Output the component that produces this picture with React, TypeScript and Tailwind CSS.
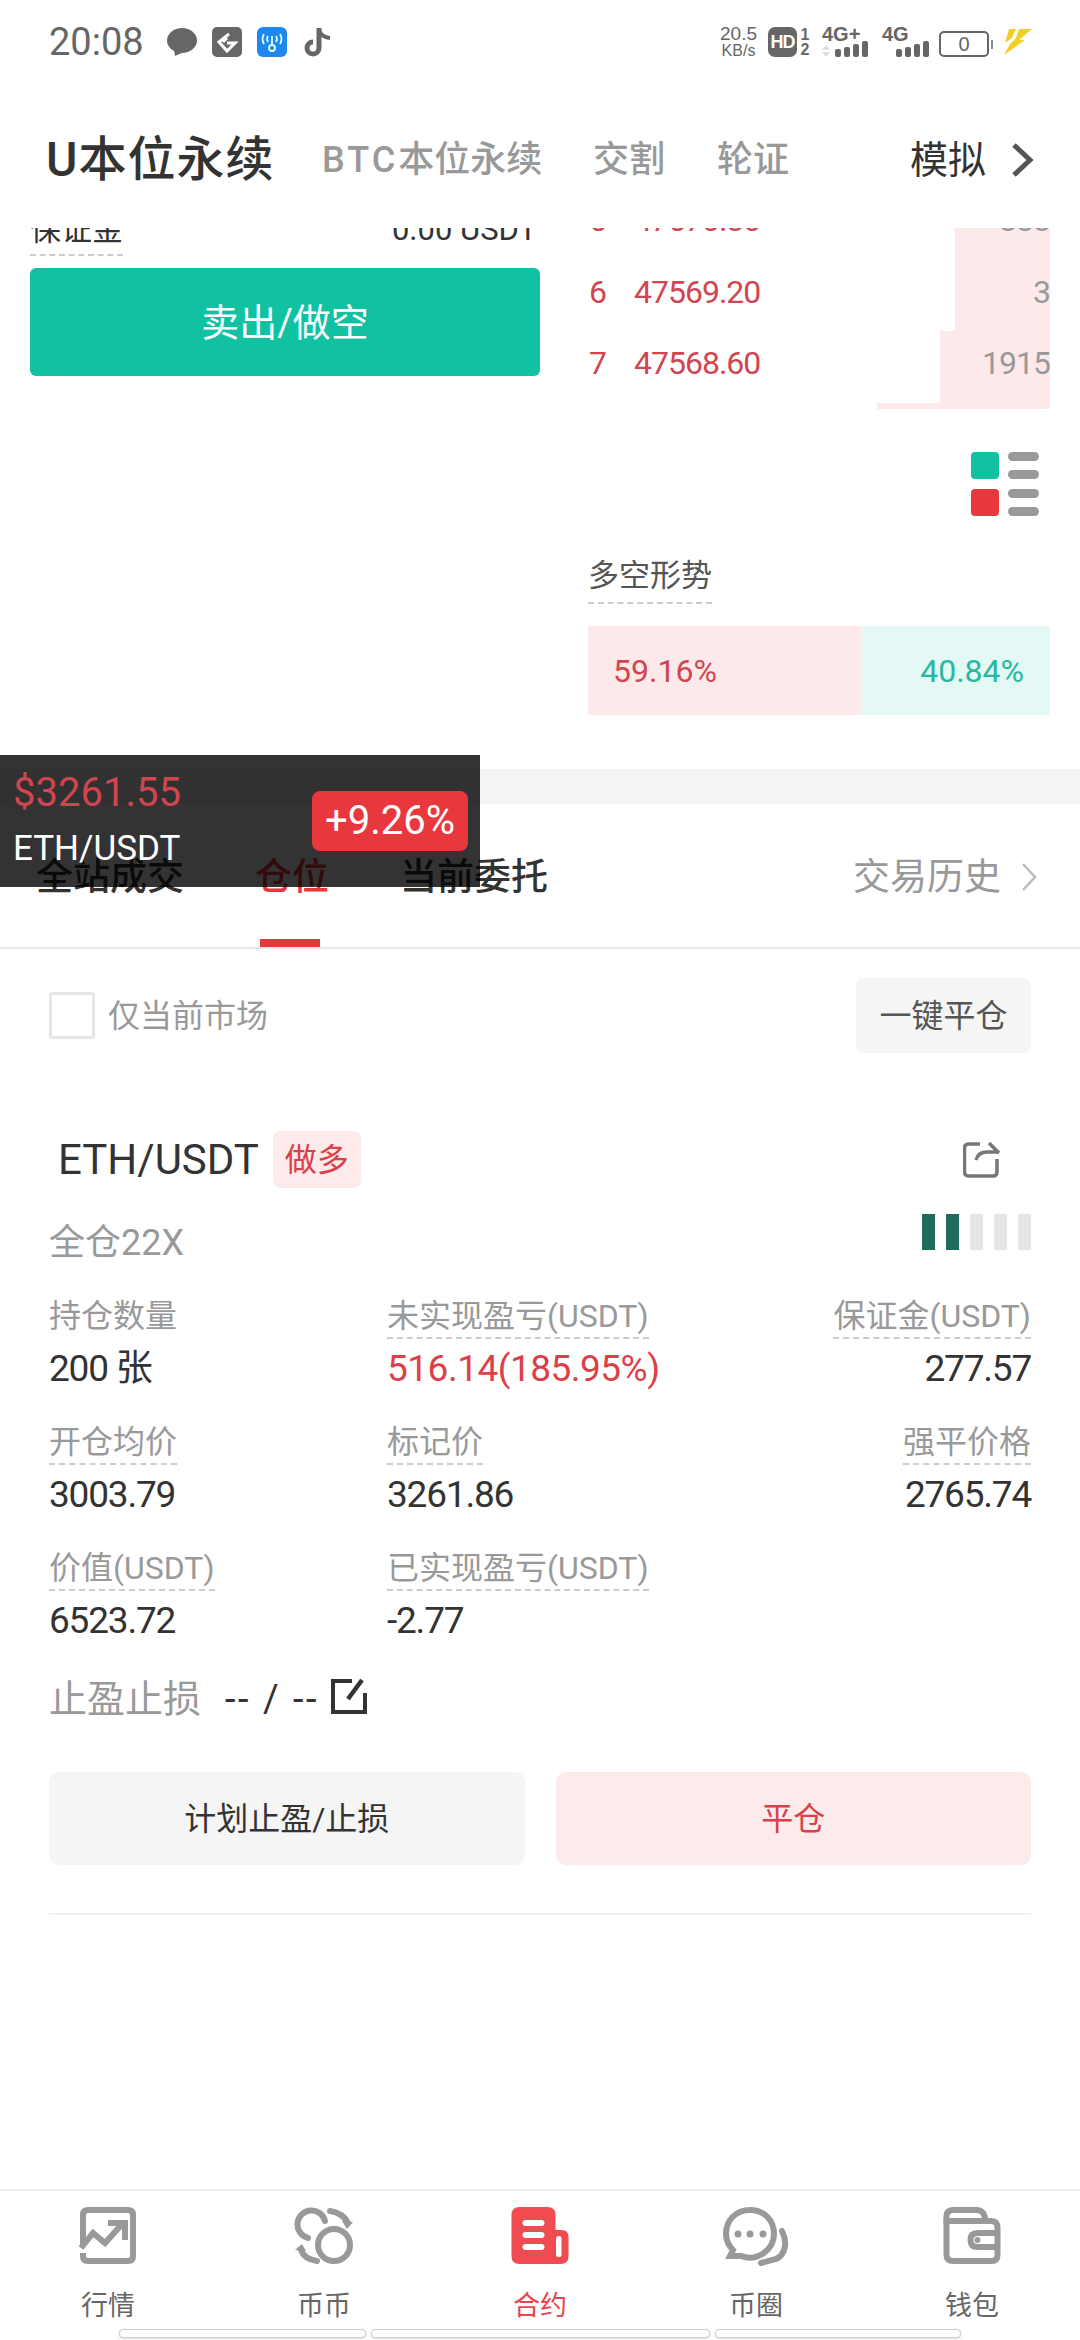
import React from "react";

const ui = { fontFamily: "Roboto, 'Noto Sans CJK SC', sans-serif" };

const tabs = ["全站成交", "仓位", "当前委托"];

type Cell = { label: string; value: string; dashed?: boolean; red?: boolean };
const cells: Cell[][] = [
  [
    { label: "持仓数量", value: "200 张" },
    { label: "未实现盈亏(USDT)", value: "516.14(185.95%)", dashed: true, red: true },
    { label: "保证金(USDT)", value: "277.57", dashed: true },
  ],
  [
    { label: "开仓均价", value: "3003.79", dashed: true },
    { label: "标记价", value: "3261.86", dashed: true },
    { label: "强平价格", value: "2765.74", dashed: true },
  ],
  [
    { label: "价值(USDT)", value: "6523.72", dashed: true },
    { label: "已实现盈亏(USDT)", value: "-2.77", dashed: true },
  ],
];

function StatusIcons() {
  return (
    <div className="flex items-center">
      <svg width="30" height="28" viewBox="0 0 30 28" className="ml-[23px]" fill="#666">
        <ellipse cx="15" cy="12.5" rx="15" ry="12.5" />
        <path d="M7 21 L8 28 L17 24 Z" />
      </svg>
      <svg width="30" height="30" viewBox="0 0 30 30" className="ml-[15px]">
        <rect width="30" height="30" rx="5" fill="#666" />
        <path d="M17 7 L7 15 L15 24 L23 16 L15 16 M15 11 L11 15" fill="none" stroke="#fff" strokeWidth="3" />
      </svg>
      <svg width="30" height="30" viewBox="0 0 30 30" className="ml-[15px]">
        <rect width="30" height="30" rx="6" fill="#1e88f0" />
        <circle cx="15" cy="21" r="3" fill="none" stroke="#dff" strokeWidth="1.8" />
        <path d="M15 9 V18 M11 9 Q9 12 11 15 M19 9 Q21 12 19 15 M7 7 Q4 12 7 17 M23 7 Q26 12 23 17" fill="none" stroke="#dff" strokeWidth="1.8" />
      </svg>
      <svg width="28" height="30" viewBox="0 0 28 30" className="ml-[17px]" fill="none" stroke="#666" strokeWidth="5">
        <path d="M15 1 V21 A6 6 0 1 1 9 15" />
        <path d="M15 3 Q17 10 26 11" strokeWidth="4" />
      </svg>
    </div>
  );
}

function Signal() {
  return (
    <div className="flex items-end gap-[3px] h-[16px]">
      <div className="w-[6px] h-[8px] bg-[#666] rounded-[2px]" />
      <div className="w-[6px] h-[10px] bg-[#666] rounded-[2px]" />
      <div className="w-[6px] h-[13px] bg-[#666] rounded-[2px]" />
      <div className="w-[6px] h-[16px] bg-[#666] rounded-[2px]" />
    </div>
  );
}

function StatusBar() {
  return (
    <div className="h-[70px] pt-[27px] pl-[49px] pr-[48px] flex items-start justify-between">
      <div className="flex items-center h-[30px]">
        <span className="text-[38px] leading-[30px] text-[#666]">20:08</span>
        <StatusIcons />
      </div>
      <div className="flex items-center h-[30px] text-[#666]" style={{ fontFamily: "'Liberation Sans', sans-serif" }}>
        <div className="w-[37px] mr-[11px] text-center">
          <div className="text-[19px] leading-[16px]">20.5</div>
          <div className="text-[16px] leading-[14px] mt-[2px]">KB/s</div>
        </div>
        <div className="w-[29px] h-[30px] bg-[#666] rounded-[7px] text-white text-[18px] font-bold flex items-center justify-center tracking-[-1px]">HD</div>
        <div className="w-[10px] ml-[3px] mr-[12px] text-[16px] font-bold leading-[15px] text-center">1<br />2</div>
        <div className="w-[46px] mr-[14px] flex flex-col">
          <span className="text-[20px] font-bold leading-[14px]">4G+</span>
          <div className="flex items-end justify-between">
            <div className="flex flex-col gap-[2px]">
              <span className="block border-x-[4px] border-b-[5px] border-x-transparent border-b-[#ddd]" />
              <span className="block border-x-[4px] border-t-[5px] border-x-transparent border-t-[#ddd]" />
            </div>
            <Signal />
          </div>
        </div>
        <div className="w-[47px] mr-[10px] flex flex-col">
          <span className="text-[20px] font-bold leading-[14px]">4G</span>
          <div className="flex justify-end"><Signal /></div>
        </div>
        <div className="w-[50px] h-[26px] mt-[4px] border-2 border-[#666] rounded-[5px] flex items-center justify-center text-[20px] leading-none">0</div>
        <div className="w-[2px] h-[9px] mt-[4px] mx-[2px] bg-[#888]" />
        <svg width="30" height="26" viewBox="0 0 30 26" className="ml-[7px]" fill="#f3cf26">
          <path d="M7 0 H14 L10 9 L3 14 Z M17 0 H30 L17 11 L23 11 L2 26 L8 15 L14 9 Z" />
        </svg>
      </div>
    </div>
  );
}

function Header() {
  return (
    <div className="h-[158px] pt-[60px] pl-[46px] pr-[45px] flex items-start">
      <div className="flex items-center h-[60px] w-full">
        <span className="text-[48px] leading-none font-medium text-[#333] w-[276px] tracking-[1px]">U本位永续</span>
        <span className="text-[36px] leading-none font-medium text-[#999] w-[271px]"><span className="tracking-[3px]">BTC</span>本位永续</span>
        <span className="text-[36px] leading-none font-medium text-[#999] w-[124px]">交割</span>
        <span className="text-[36px] leading-none font-medium text-[#999]">轮证</span>
        <span className="ml-auto text-[38px] leading-none text-[#333]">模拟</span>
        <svg width="26" height="36" viewBox="0 0 26 36" className="ml-[23px]" fill="none" stroke="#555" strokeWidth="5">
          <path d="M5 3 L21 18 L5 33" />
        </svg>
      </div>
    </div>
  );
}

function Market() {
  return (
    <div className="h-[541px] overflow-hidden relative">
      <div className="flex -mt-[24px]">
        <div className="ml-[30px] shrink-0 w-[510px]">
          <div className="h-[52px] flex items-end justify-between text-[31px] text-[#333]">
            <span className="border-b-2 border-dashed border-[#ccc] leading-[40px] pb-[4px]">保证金</span>
            <span className="pb-[6px] pr-[3px] leading-[40px]">0.00 USDT</span>
          </div>
          <div className="h-[108px] mt-[12px] bg-[#10c2a2] rounded-[6px] flex items-center justify-center text-[38px] text-white pt-[2px]">卖出/做空</div>
        </div>
        <div className="ml-[48px] w-[462px] shrink-0">
          <div className="h-[190px] relative text-[32px]">
            <div className="absolute right-0 top-[24px] w-[95px] h-[103px] bg-[#fde9e9]" />
            <div className="absolute right-0 top-[127px] w-[110px] h-[72px] bg-[#fde9e9]" />
            <div className="absolute right-0 top-[199px] w-[173px] h-[6px] bg-[#fde9e9]" />
            {[
              { n: "5", p: "47570.80", q: "888", y: "-top-[8px]" },
              { n: "6", p: "47569.20", q: "3", y: "top-[64px]" },
              { n: "7", p: "47568.60", q: "1915", y: "top-[135px]" },
            ].map((r) => (
              <div key={r.n} className={`absolute left-0 right-0 ${r.y} h-[48px] flex items-center leading-none tracking-[-1px]`}>
                <span className="w-[46px] pl-[1px] text-[#d0454f]">{r.n}</span>
                <span className="text-[#d0454f]">{r.p}</span>
                <span className="ml-auto text-[#999]">{r.q}</span>
              </div>
            ))}
          </div>
        </div>
      </div>
      <div className="absolute right-[41px] top-[224px] w-[68px] h-[63px] grid grid-cols-[28px_31px] gap-x-[9px] gap-y-[10px]">
        <div className="h-[27px] rounded-[4px] bg-[#10c2a2]" />
        <div className="flex flex-col justify-between">
          <div className="h-[9px] rounded-full bg-[#999]" />
          <div className="h-[9px] rounded-full bg-[#999]" />
        </div>
        <div className="h-[27px] rounded-[4px] bg-[#e8383d]" />
        <div className="flex flex-col justify-between">
          <div className="h-[9px] rounded-full bg-[#999]" />
          <div className="h-[9px] rounded-full bg-[#999]" />
        </div>
      </div>
      <div className="absolute left-[588px] right-[30px] top-[326px]">
        <span className="inline-block text-[31px] leading-[44px] text-[#555] border-b-2 border-dashed border-[#ccc] pb-[4px]">多空形势</span>
        <div className="mt-[22px] h-[89px] flex text-[32px]">
          <div className="w-[273px] bg-[#fde9e9] text-[#d0454f] flex items-center pl-[25px]">59.16%</div>
          <div className="flex-1 bg-[#e4f8f6] text-[#26b8a0] flex items-center justify-end pr-[26px]">40.84%</div>
        </div>
      </div>
    </div>
  );
}

function Position() {
  return (
    <div className="px-[49px]">
      <div className="flex items-center justify-between pt-[29px]">
        <div className="flex items-center">
          <div className="w-[46px] h-[47px] border-[3px] border-[#e6e6e6] rounded-[4px]" />
          <span className="ml-[13px] text-[32px] leading-none text-[#999]">仅当前市场</span>
        </div>
        <div className="w-[175px] h-[75px] bg-[#f5f5f5] rounded-[8px] flex items-center justify-center text-[32px] text-[#555]">一键平仓</div>
      </div>
      <div className="flex items-center justify-between mt-[78px] h-[57px]">
        <div className="flex items-center pl-[9px]">
          <span className="text-[42px] leading-none text-[#333]">ETH/USDT</span>
          <span className="ml-[14px] w-[88px] h-[57px] rounded-[8px] bg-[#fdeaea] flex items-center justify-center text-[32px] text-[#d9404a]">做多</span>
        </div>
        <svg width="38" height="36" viewBox="0 0 38 36" className="mr-[30px]" fill="none" stroke="#777" strokeWidth="3.5">
          <path d="M17 2 H6 Q1.5 2 1.5 6 V30 Q1.5 34 6 34 H30 Q34 34 34 30 V17" />
          <path d="M13 18 Q15 10 24 10 H36 M26 1 L36 11" />
        </svg>
      </div>
      <div className="flex items-start justify-between mt-[26px] h-[37px]">
        <span className="mt-[11px] text-[36px] leading-[36px] text-[#999]">全仓22X</span>
        <div className="flex gap-[11px]">
          <div className="w-[13px] h-[36px] bg-[#1f6b5c]" />
          <div className="w-[13px] h-[36px] bg-[#1f6b5c]" />
          <div className="w-[13px] h-[36px] bg-[#e5e5e5]" />
          <div className="w-[13px] h-[36px] bg-[#e5e5e5]" />
          <div className="w-[13px] h-[36px] bg-[#e5e5e5]" />
        </div>
      </div>
      <div className="mt-[46px] flex flex-col gap-[10px]">
        {cells.map((row, i) => (
          <div key={i} className="grid grid-cols-[338px_1fr_auto] h-[116px]">
            {row.map((c, j) => (
              <div key={c.label} className={`flex flex-col ${j === 2 ? "items-end" : "items-start"}`}>
                <span className={`text-[32px] leading-[38px] h-[42px] text-[#999] ${c.dashed ? "border-b-2 border-dashed border-[#ccc]" : ""}`}>{c.label}</span>
                <span className={`mt-[10px] text-[37px] leading-[40px] ${c.red ? "text-[#dc3f48] tracking-[-0.5px]" : "text-[#333] tracking-[-1.2px]"}`}>{c.value}</span>
              </div>
            ))}
          </div>
        ))}
      </div>
      <div className="flex items-center h-[40px] mt-[14px]">
        <span className="text-[38px] leading-none text-[#999]">止盈止损</span>
        <span className="ml-[24px] text-[38px] leading-none text-[#333] tracking-[2.5px]">-- / --</span>
        <svg width="38" height="38" viewBox="0 0 38 38" className="ml-[11px] -mt-[6px]" fill="none" stroke="#333" strokeWidth="4">
          <path d="M22 4 H3 V35 H35 V16" />
          <path d="M18 22 L32 3" strokeWidth="4.5" />
        </svg>
      </div>
      <div className="flex gap-[31px] mt-[53px]">
        <div className="flex-1 h-[93px] bg-[#f5f5f5] rounded-[10px] flex items-center justify-center text-[32px] text-[#333]">计划止盈/止损</div>
        <div className="flex-1 h-[93px] bg-[#fdeaea] rounded-[10px] flex items-center justify-center text-[32px] text-[#d9404a]">平仓</div>
      </div>
      <div className="h-[2px] bg-[#f0f0f0] mt-[48px]" />
    </div>
  );
}

const navItems = [
  { label: "行情", icon: (
    <g transform="translate(5 0)" fill="none" stroke="#999" strokeWidth="6">
      <path d="M3 38 V8 Q3 3 8 3 H48 Q53 3 53 8 V49 Q53 54 48 54 H8 Q3 54 3 49 V46" />
      <path d="M1 41 L13 26 L25 36 L43 16" />
      <path d="M28 16 H45 V33" />
    </g>
  ) },
  { label: "币币", icon: (
    <g transform="translate(4 0)" fill="none" stroke="#999" strokeWidth="6">
      <path d="M30 14 A14 14 0 1 0 13 31" strokeLinecap="round" />
      <path d="M35 4 Q48 6 53 16" strokeLinecap="round" />
      <path d="M58 15 L52 22 L47 14 Z" fill="#999" stroke="none" />
      <circle cx="39" cy="38" r="16" />
      <path d="M6 43 Q9 52 22 54" strokeLinecap="round" />
      <path d="M0 43 L7 37 L11 44 Z" fill="#999" stroke="none" />
    </g>
  ) },
  { label: "合约", active: true, icon: (
    <g transform="translate(4.5 0)">
      <path d="M8 0 H36 Q44 0 44 8 V23 H50 Q57 23 57 30 V49 Q57 57 49 57 H8 Q0 57 0 49 V8 Q0 0 8 0 Z" fill="#ef4b50" />
      <rect x="11" y="13" width="22" height="6" rx="3" fill="#fff" />
      <rect x="11" y="25" width="22" height="6" rx="3" fill="#fff" />
      <rect x="11" y="37" width="22" height="6" rx="3" fill="#fff" />
      <rect x="44.5" y="29" width="5.5" height="21" rx="2.5" fill="#fff" />
    </g>
  ) },
  { label: "币圈", icon: (
    <g>
      <path d="M27 3 C13 3 3 13 3 27 C3 34 6 39 10 43 L7 49 L18 49 C34 55 51 43 51 27 C51 13 41 3 27 3 Z" fill="none" stroke="#999" strokeWidth="6" />
      <circle cx="15" cy="27" r="3.5" fill="#999" />
      <circle cx="27" cy="27" r="3.5" fill="#999" />
      <circle cx="40" cy="27" r="3.5" fill="#999" />
      <path d="M59 24 C65 36 62 48 53 52 L38 56" fill="none" stroke="#999" strokeWidth="6" strokeLinecap="round" />
    </g>
  ) },
  { label: "钱包", icon: (
    <g transform="translate(4.5 0)" fill="none" stroke="#999" strokeWidth="6">
      <path d="M3 17 V9 Q3 3 10 3 H33 Q39 3 41 9 L42 13" />
      <path d="M3 14 H48 Q54 14 54 21 V48 Q54 54 48 54 H10 Q3 54 3 48 Z" />
      <path d="M54 26 H34 Q27 26 27 33 Q27 40 34 40 H54" />
      <circle cx="34" cy="33" r="3" fill="#999" stroke="none" />
    </g>
  ) },
];

function BottomNav() {
  return (
    <div className="absolute left-0 right-0 bottom-0 h-[151px] border-t-2 border-[#eee] bg-white">
      <div className="grid grid-cols-5 pt-[16px]">
        {navItems.map((n) => (
          <div key={n.label} className="flex flex-col items-center">
            <svg width="66" height="60" viewBox="0 0 66 60">{n.icon}</svg>
            <span className={`mt-[23px] text-[27px] leading-[32px] ${n.active ? "text-[#e8454c]" : "text-[#666]"}`}>{n.label}</span>
          </div>
        ))}
      </div>
      <div className="absolute left-[119px] bottom-[2px] flex gap-[5px]">
        <div className="w-[247px] h-[9px] rounded-[4px] bg-white border border-[#ccc] shadow-sm" />
        <div className="w-[339px] h-[9px] rounded-[4px] bg-white border border-[#ccc] shadow-sm" />
        <div className="w-[246px] h-[9px] rounded-[4px] bg-white border border-[#ccc] shadow-sm" />
      </div>
    </div>
  );
}

export default function App() {
  return (
    <div className="relative w-[1080px] h-[2340px] bg-white overflow-hidden" style={ui}>
      <StatusBar />
      <Header />
      <Market />
      <div className="h-[35px] bg-[#f3f4f6]" />
      <div className="h-[145px] border-b-2 border-[#e8e8e8] relative flex items-start pt-[54px] pl-[36px] pr-[43px]">
        {tabs.map((t, i) => (
          <span key={t} className={`text-[37px] leading-[40px] font-medium mr-[71px] ${i === 1 ? "text-[#e8383d]" : "text-[#333]"}`}>{t}</span>
        ))}
        <span className="ml-auto text-[37px] leading-[40px] text-[#999]">交易历史</span>
        <svg width="16" height="32" viewBox="0 0 16 32" className="ml-[20px] mt-[3px]" fill="none" stroke="#bbb" strokeWidth="2.5">
          <path d="M2 3 L14 16 L2 29" />
        </svg>
        <div className="absolute left-[260px] bottom-0 w-[60px] h-[8px] bg-[#e8383d]" />
      </div>
      <Position />
      <BottomNav />
      <div className="absolute left-0 top-[755px] w-[480px] h-[132px] bg-black/80">
        <div className="absolute left-[13px] top-[16px] text-[40px] leading-[44px] text-[#d0454f]">$3261.55</div>
        <div className="absolute left-[13px] top-[72px] text-[35px] leading-[44px] text-white">ETH/USDT</div>
        <div className="absolute left-[312px] top-[36px] w-[156px] h-[60px] rounded-[8px] bg-[#e8383d] flex items-center justify-center text-[40px] text-white">+9.26%</div>
      </div>
    </div>
  );
}
